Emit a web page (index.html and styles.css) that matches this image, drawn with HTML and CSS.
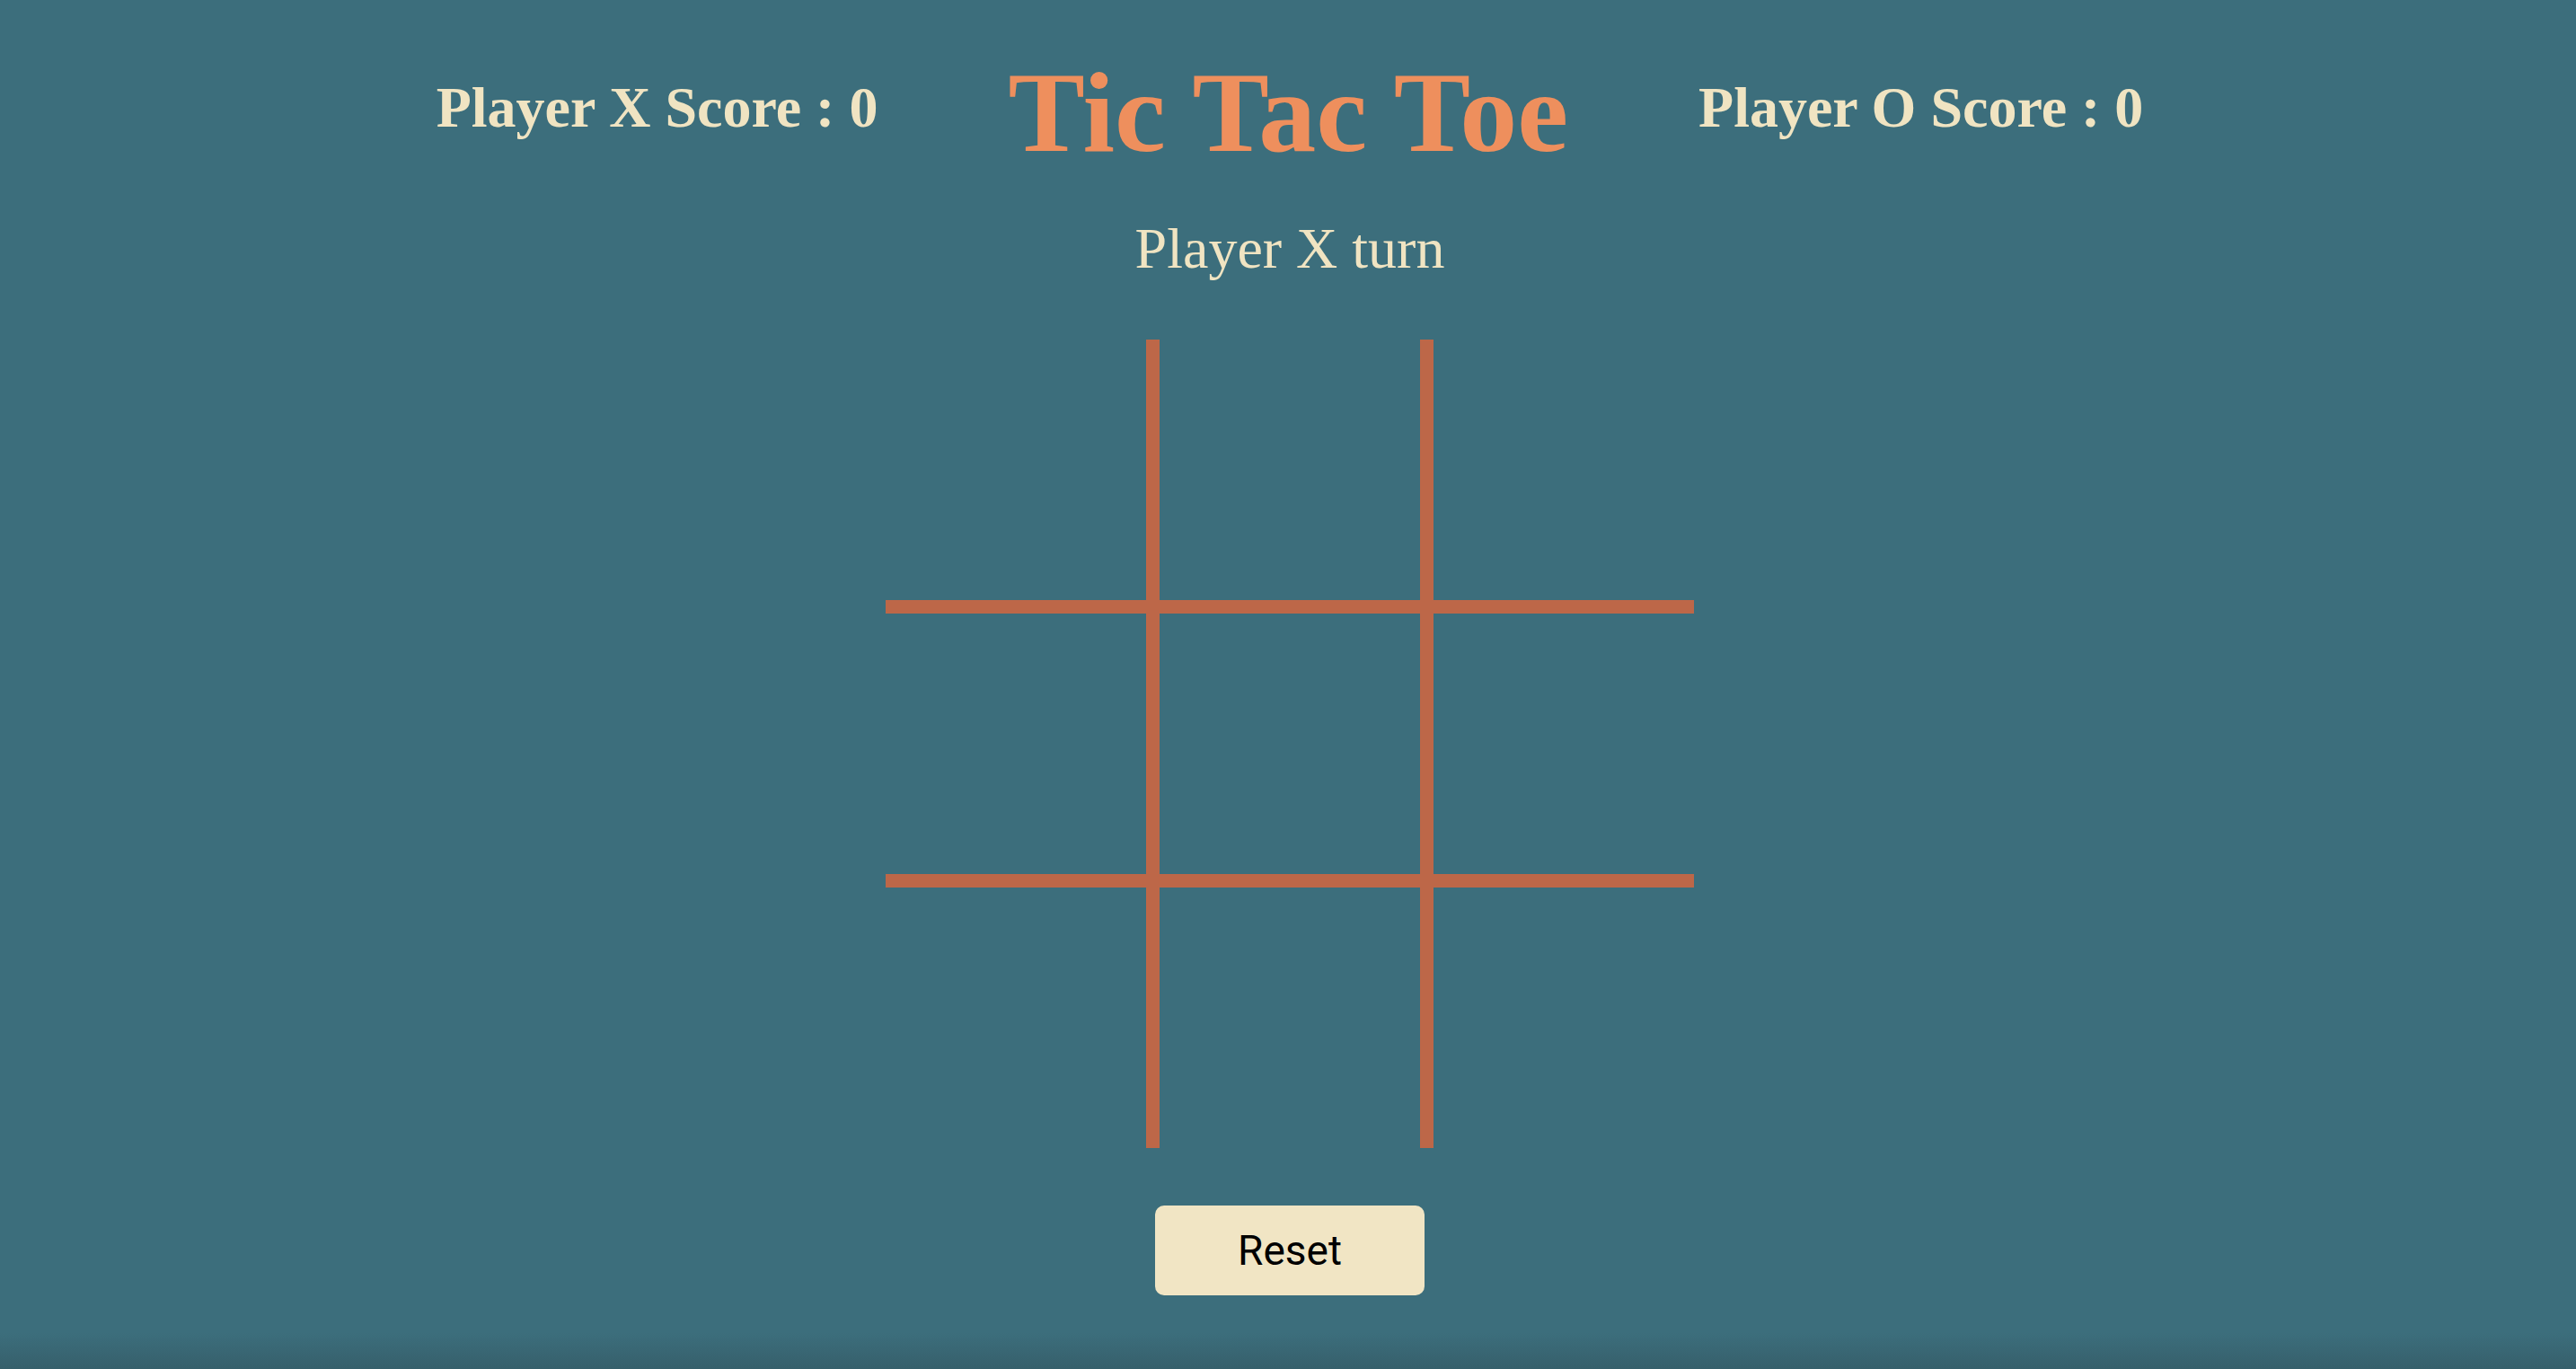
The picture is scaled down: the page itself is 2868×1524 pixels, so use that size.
FILE: index.html
```html
<!DOCTYPE html>
<html lang="en">
<head>
<meta charset="utf-8">
<title>Tic Tac Toe</title>
<link rel="stylesheet" href="styles.css">
</head>
<body>
<main class="app">
  <header class="header">
    <div class="score">Player X Score : 0</div>
    <h1 class="title">Tic Tac Toe</h1>
    <div class="score">Player O Score : 0</div>
  </header>
  <div class="turn">Player X turn</div>
  <div class="board">
    <div class="cell"></div><div class="cell"></div><div class="cell"></div>
    <div class="cell"></div><div class="cell"></div><div class="cell"></div>
    <div class="cell"></div><div class="cell"></div><div class="cell"></div>
  </div>
  <button class="reset">Reset</button>
</main>
</body>
</html>
```

FILE: styles.css
```css
html {
  height: 100%;
  background: linear-gradient(to bottom, #3c6e7c calc(100% - 40px), #365f6b 100%);
}
body {
  margin: 0;
  min-height: 100%;
  font-family: "Liberation Serif", "Times New Roman", serif;
}
.app {
  display: flex;
  flex-direction: column;
  align-items: center;
  padding-top: 61px;
  padding-left: 4px;
}
.header {
  display: flex;
  align-items: center;
  justify-content: center;
  gap: 145px;
}
.score {
  font-size: 64px;
  font-weight: bold;
  line-height: 1;
  color: #f0e4c2;
  margin-bottom: 10px;
}
.title {
  margin: 0;
  font-size: 128px;
  font-weight: bold;
  line-height: 1;
  color: #ee8f5d;
}
.turn {
  margin-top: 56px;
  font-size: 64px;
  line-height: 1;
  color: #f0e4c2;
}
.board {
  margin-top: 69px;
  width: 900px;
  height: 900px;
  display: grid;
  grid-template-columns: repeat(3, 290px);
  grid-template-rows: repeat(3, 290px);
  gap: 15px;
  background: #bd6748;
}
.cell {
  background: #3c6e7c;
}
.reset {
  margin-top: 64px;
  width: 300px;
  height: 100px;
  border: none;
  border-radius: 10px;
  background: #f1e5c4;
  color: #000;
  font-family: Roboto, "Liberation Sans", sans-serif;
  font-size: 46px;
  cursor: pointer;
}
```
